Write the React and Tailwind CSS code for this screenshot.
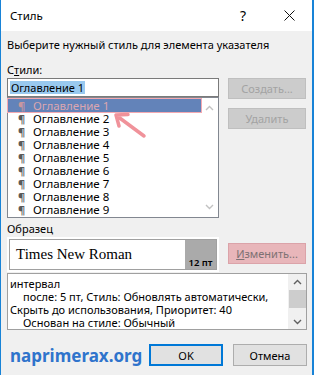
import React from "react";

const ui = { fontFamily: '"Noto Sans", "Open Sans", sans-serif' };

const styles = [
  "Оглавление 1",
  "Оглавление 2",
  "Оглавление 3",
  "Оглавление 4",
  "Оглавление 5",
  "Оглавление 6",
  "Оглавление 7",
  "Оглавление 8",
  "Оглавление 9",
];

const ChevronUp = ({ color = "#c2c2c2" }) => (
  <svg width="9" height="6" viewBox="0 0 9 6">
    <path d="M1 5 L4.5 1.5 L8 5" fill="none" stroke={color} strokeWidth="1.4" />
  </svg>
);

const ChevronDown = ({ color = "#c2c2c2" }) => (
  <svg width="9" height="6" viewBox="0 0 9 6">
    <path d="M1 1 L4.5 4.5 L8 1" fill="none" stroke={color} strokeWidth="1.4" />
  </svg>
);

const Button = ({ children, className = "" }) => (
  <div
    className={`flex items-center justify-center text-[11px] leading-none whitespace-nowrap ${className}`}
  >
    {children}
  </div>
);

const App = () => {
  return (
    <div
      style={ui}
      className="relative w-[314px] h-[375px] overflow-hidden bg-[#f0f0f0] border-l border-r-2 border-[#1883d7] text-black"
    >
      {/* Title bar */}
      <div className="h-[31px] bg-white flex items-center pl-[9px]">
        <span className="text-[11.5px] leading-none">Стиль</span>
        <span className="ml-auto text-[14px] leading-none mr-[38px]">?</span>
        <svg width="11" height="11" viewBox="0 0 11 11" className="mr-[17px]">
          <path d="M0.5 0.5 L10.5 10.5 M10.5 0.5 L0.5 10.5" stroke="#111" strokeWidth="1" />
        </svg>
      </div>

      <div className="pl-[6px] pr-[5px]">
        <div className="mt-[6px] h-[16px] leading-[16px] text-[11px] whitespace-nowrap">
          Выберите нужный стиль для элемента указателя
        </div>
        <div className="mt-[9px] h-[16px] leading-[16px] text-[11px]">
          С<span className="underline">т</span>или:
        </div>

        <div className="flex gap-[9px]">
          {/* Left column */}
          <div className="w-[212px] flex flex-col">
            <div className="h-[19px] bg-white border border-[#7a7a7a] flex items-center pl-[2px]">
              <span className="bg-[#99c9ef] text-[11px] leading-[13px] px-[1px]">
                Оглавление 1
              </span>
            </div>
            <div className="h-[121px] bg-white border border-[#828790] flex">
              <div className="flex-1 pt-[1px]">
                {styles.map((s, i) => (
                  <div
                    key={s}
                    className={
                      i === 0
                        ? "h-[13px] flex items-center bg-[#6383b9] outline outline-1 outline-[#f4a9b1] text-[#dba6b0]"
                        : "h-[13px] flex items-center"
                    }
                  >
                    <span
                      className={`w-[25px] pl-[10px] text-[11px] leading-[12px] font-bold ${
                        i === 0 ? "text-[#c9979f]" : "text-[#5a5a5a]"
                      }`}
                    >
                      ¶
                    </span>
                    <span className="text-[11.5px] leading-[12px] whitespace-nowrap">{s}</span>
                  </div>
                ))}
              </div>
              <div className="w-[17px] flex flex-col items-center justify-between py-[7px]">
                <ChevronUp />
                <ChevronDown />
              </div>
            </div>
          </div>

          {/* Right column */}
          <div className="flex flex-col gap-[9px]">
            <Button className="w-[78px] h-[21px] bg-[#cccccc] border border-[#bfbfbf] text-[#a3a3a3]">
              Создать...
            </Button>
            <Button className="w-[78px] h-[21px] bg-[#cccccc] border border-[#bfbfbf] text-[#a3a3a3]">
              Удалить
            </Button>
          </div>
        </div>

        <div className="mt-[3px] h-[16px] leading-[16px] text-[11px]">Образец</div>

        <div className="flex gap-[9px] items-start">
          <div className="w-[212px] h-[35px] bg-white p-[2px]">
            <div className="h-full border border-[#a0a0a0] flex">
              <div
                className="flex-1 flex items-center pl-[6px] text-[15px] leading-none"
                style={{ fontFamily: '"Liberation Serif", serif' }}
              >
                Times New Roman
              </div>
              <div className="w-[31px] bg-[#aaaaaa] flex items-end justify-center pb-[2px]">
                <span className="text-[9.5px] leading-none font-semibold whitespace-nowrap">
                  12 пт
                </span>
              </div>
            </div>
          </div>
          <Button className="mt-[6px] w-[78px] h-[21px] bg-[#e8b6ba] border border-[#dba3a9] text-[#7d7173]">
            <span className="underline">И</span>зменить...
          </Button>
        </div>

        <div className="mt-[1px] h-[57px] bg-white border border-[#a0a0a0] flex">
          <div className="flex-1 pl-[2px] pt-[3px] text-[11px] leading-[13px] overflow-hidden whitespace-nowrap">
            <div>интервал</div>
            <div className="pl-[13px]">после: 5 пт, Стиль: Обновлять автоматически,</div>
            <div>Скрыть до использования, Приоритет: 40</div>
            <div className="pl-[13px]">Основан на стиле: Обычный</div>
          </div>
          <div className="w-[18px] bg-[#f0f0f0] flex flex-col items-center">
            <div className="h-[16px] flex items-center">
              <ChevronUp color="#606060" />
            </div>
            <div className="w-[17px] h-[18px] bg-[#cdcdcd]" />
            <div className="flex-1 flex items-end pb-[4px]">
              <ChevronDown color="#606060" />
            </div>
          </div>
        </div>

        <div className="mt-[14px] flex items-center">
          <span className="pl-[3px] text-[17px] leading-none font-bold text-[#2f74cc]">
            naprimerax.org
          </span>
          <Button className="ml-auto w-[74px] h-[22px] bg-[#e1e1e1] border-2 border-[#0078d7]">
            OK
          </Button>
          <Button className="ml-[10px] w-[74px] h-[22px] bg-[#e1e1e1] border border-[#adadad]">
            Отмена
          </Button>
        </div>
      </div>

      {/* Annotation arrow */}
      <svg
        className="absolute left-[108px] top-[108px] pointer-events-none"
        width="42"
        height="34"
        viewBox="0 0 42 34"
      >
        <path
          d="M35 28 L8 8 M7 7 L19 6.5 M7 7 L10 18"
          fill="none"
          stroke="#f0929a"
          strokeWidth="3.5"
          strokeLinecap="round"
          strokeLinejoin="round"
        />
      </svg>
    </div>
  );
};

export default App;
